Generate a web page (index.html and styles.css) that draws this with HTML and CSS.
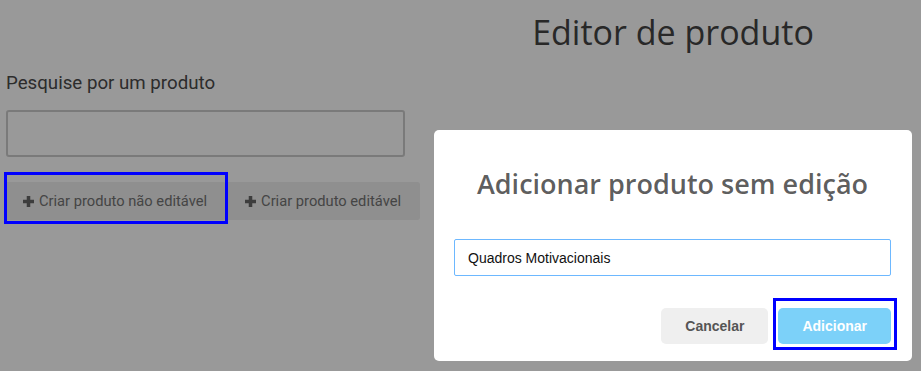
FILE: index.html
```html
<!DOCTYPE html>
<html lang="pt-BR">
<head>
    <meta charset="UTF-8">
    <meta name="viewport" content="width=device-width, initial-scale=1.0">
    <title>Editor de produto</title>
    <link rel="stylesheet" href="styles.css">
</head>
<body>
    <div class="pagina">
        <div class="coluna-busca">
            <label class="rotulo" for="busca">Pesquise por um produto</label>
            <input class="campo-busca" id="busca" type="text">
            <div class="acoes">
                <button class="botao-criar">
                    <svg class="icone-mais" viewBox="0 0 10 10" width="11" height="11"><path d="M3.4 0h3.2v3.4H10v3.2H6.6V10H3.4V6.6H0V3.4h3.4z"/></svg>
                    Criar produto não editável
                </button>
                <button class="botao-criar">
                    <svg class="icone-mais" viewBox="0 0 10 10" width="11" height="11"><path d="M3.4 0h3.2v3.4H10v3.2H6.6V10H3.4V6.6H0V3.4h3.4z"/></svg>
                    Criar produto editável
                </button>
            </div>
            <div class="destaque destaque-criar"></div>
        </div>
        <div class="coluna-titulo">
            <h1>Editor de produto</h1>
        </div>
    </div>

    <div class="sobreposicao">
        <div class="modal">
            <div class="modal-titulo">Adicionar produto sem edição</div>
            <div class="modal-conteudo">
                <input class="modal-campo" type="text" value="Quadros Motivacionais">
            </div>
            <div class="modal-rodape">
                <button class="modal-botao botao-cancelar">Cancelar</button>
                <button class="modal-botao botao-confirmar">Adicionar</button>
            </div>
            <div class="destaque destaque-confirmar"></div>
        </div>
    </div>
</body>
</html>
```

FILE: styles.css
```css
body {
    margin: 0;
    padding: 0;
    background-color: #fff;
    font-family: Roboto, "Liberation Sans", sans-serif;
    color: #474747;
}

.pagina {
    display: grid;
    grid-template-columns: 425px 1fr;
    height: 371px;
}

.coluna-busca {
    position: relative;
    padding: 72px 0 0 6px;
}

.rotulo {
    display: block;
    font-size: 18.7px;
    line-height: 22px;
    color: #4a4a4a;
}

.campo-busca {
    display: block;
    box-sizing: border-box;
    width: 399px;
    height: 47px;
    margin-top: 16px;
    border: 2px solid #ccc;
    border-radius: 3px;
    background: #fff;
}

.acoes {
    display: flex;
    margin: 25px 0 0 -2px;
}

.botao-criar {
    display: flex;
    align-items: center;
    gap: 5px;
    height: 38px;
    padding: 0 19px 0 19px;
    border: none;
    border-radius: 3px;
    background-color: #eee;
    color: #737373;
    font-family: Roboto, "Liberation Sans", sans-serif;
    font-size: 14.7px;
}

.icone-mais {
    fill: #666;
}

.destaque {
    position: absolute;
    border: 3px solid #00f;
    pointer-events: none;
    z-index: 2;
}

.destaque-criar {
    left: 4px;
    top: 172px;
    width: 218px;
    height: 46px;
}

.coluna-titulo {
    text-align: center;
}

h1 {
    margin: 9px 0 0;
    font-family: "Open Sans", "Noto Sans", sans-serif;
    font-weight: 400;
    font-size: 34px;
    color: #444;
}

.sobreposicao {
    position: fixed;
    inset: 0;
    z-index: 1;
    background-color: rgba(0, 0, 0, 0.4);
    display: flex;
    justify-content: flex-end;
    align-items: flex-start;
    padding: 130px 9px 0 0;
}

.modal {
    position: relative;
    width: 478px;
    height: 231px;
    box-sizing: border-box;
    background-color: #fff;
    border-radius: 5px;
    padding: 0 21px 0 20px;
}

.modal-titulo {
    margin-top: 36px;
    text-align: center;
    font-family: "Open Sans", "Noto Sans", sans-serif;
    font-weight: 600;
    font-size: 27px;
    line-height: 36px;
    color: rgba(0, 0, 0, 0.65);
}

.modal-conteudo {
    margin-top: 37px;
}

.modal-campo {
    display: block;
    box-sizing: border-box;
    width: 100%;
    height: 37px;
    padding: 0 13px;
    border: 1px solid #6db8ff;
    border-radius: 2px;
    outline: none;
    font-family: "Liberation Sans", Arial, sans-serif;
    font-size: 14px;
    color: #111;
}

.modal-rodape {
    display: flex;
    justify-content: flex-end;
    gap: 10px;
    margin-top: 32px;
}

.modal-botao {
    height: 36px;
    padding: 0 24px;
    border: none;
    border-radius: 5px;
    font-family: "Liberation Sans", Arial, sans-serif;
    font-size: 14px;
    font-weight: 700;
}

.botao-cancelar {
    background-color: #efefef;
    color: #555;
}

.botao-confirmar {
    background-color: #7cd1f9;
    color: #fff;
}

.destaque-confirmar {
    left: 339px;
    top: 168px;
    width: 118px;
    height: 46px;
}
```
